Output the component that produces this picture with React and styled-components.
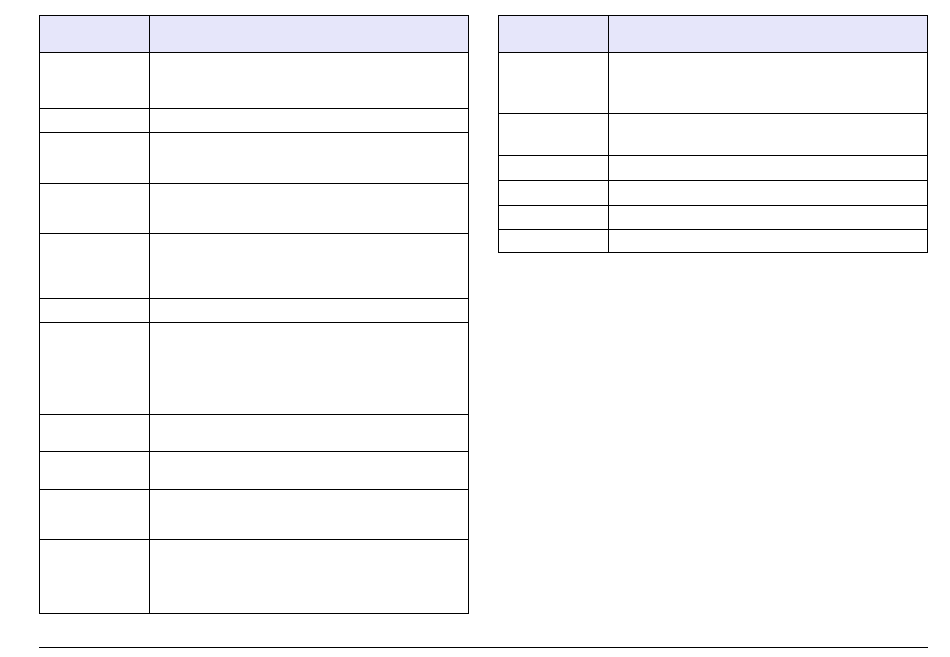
import React from 'react';
import styled, { createGlobalStyle } from 'styled-components';

const GlobalStyle = createGlobalStyle`
  html, body {
    margin: 0;
    padding: 0;
    background: #ffffff;
    font-family: "Liberation Sans", Arial, sans-serif;
  }
`;

/**
 * Row boundaries (y of each horizontal rule) read from the page
 */
const LEFT_LINES = [15, 52, 108, 132, 183, 233, 298, 322, 414, 451, 489, 539, 613];
const RIGHT_LINES = [15, 52, 113, 155, 180, 205, 229, 252];

const toHeights = (lines) => lines.slice(1).map((y, i) => y - lines[i]);

const Page = styled.div`
  width: 950px;
  height: 657px;
  box-sizing: border-box;
  padding: 15px 0 0 39px;
  display: flex;
  flex-direction: column;
`;

const Tables = styled.div`
  display: flex;
  align-items: flex-start;
  gap: 29px;
`;

const Table = styled.div`
  width: 430px;
  box-sizing: border-box;
  border: 1px solid #000;
  border-bottom: none;
  display: flex;
  flex-direction: column;
`;

const Row = styled.div`
  display: grid;
  grid-template-columns: 110px 1fr;
  box-sizing: border-box;
  border-bottom: 1px solid #000;
  background: ${({ $header }) => ($header ? '#e6e6fa' : '#ffffff')};
`;

const Cell = styled.div`
  box-sizing: border-box;
  font-size: 12px;
  color: #000;
  padding: 4px 6px;

  &:first-child {
    border-right: 1px solid #000;
  }
`;

const FooterRule = styled.div`
  width: 889px;
  height: 1px;
  background: #000;
  margin-top: 33px;
`;

const SpecTable = ({ lines }) => (
  <Table>
    {toHeights(lines).map((h, i) => (
      <Row key={i} $header={i === 0} style={{ height: h }}>
        <Cell />
        <Cell />
      </Row>
    ))}
  </Table>
);

export default function App() {
  return (
    <>
      <GlobalStyle />
      <Page>
        <Tables>
          <SpecTable lines={LEFT_LINES} />
          <SpecTable lines={RIGHT_LINES} />
        </Tables>
        <FooterRule />
      </Page>
    </>
  );
}
